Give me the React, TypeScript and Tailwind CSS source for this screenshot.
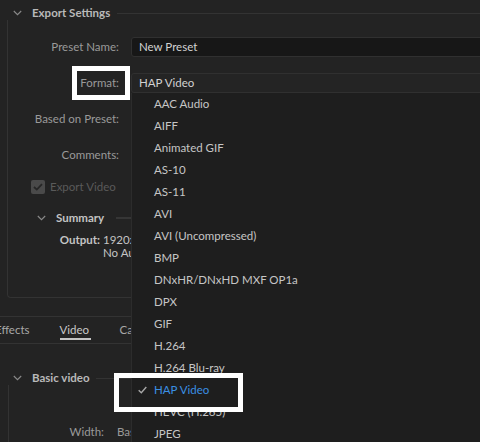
import React from "react";

function Chevron({ className = "" }: { className?: string }) {
  return (
    <svg className={className} width="9" height="6" viewBox="0 0 9 6" fill="none">
      <path d="M0.8 1 L4.5 4.7 L8.2 1" stroke="#8a8a8a" strokeWidth="1.1" />
    </svg>
  );
}

const items = [
  "AAC Audio",
  "AIFF",
  "Animated GIF",
  "AS-10",
  "AS-11",
  "AVI",
  "AVI (Uncompressed)",
  "BMP",
  "DNxHR/DNxHD MXF OP1a",
  "DPX",
  "GIF",
  "H.264",
  "H.264 Blu-ray",
  "HAP Video",
  "HEVC (H.265)",
  "JPEG",
];

export default function App() {
  return (
    <div className="relative w-[480px] h-[442px] overflow-hidden bg-[#232323] text-[11.5px] leading-[14px] font-['Lato','Noto_Sans',sans-serif]">
      {/* Export Settings section */}
      <div className="pt-[6px]">
        <div className="flex items-center h-[14px]">
          <Chevron className="ml-[13px]" />
          <span className="ml-[10px] font-bold text-[#b9b9b9]">Export Settings</span>
          <div className="ml-[7px] flex-1 h-px bg-[#333333]" />
        </div>
        <div className="ml-[7px] h-[278px] pt-[17px] border-l border-b border-[#333333] rounded-bl-[4px]">
          <div className="grid grid-cols-[111px_1fr] gap-x-[12px] items-center h-[20px]">
            <span className="text-right text-[#9a9a9a]">Preset Name:</span>
            <div className="h-[20px] bg-[#171717] border border-[#303030] rounded-[3px] pl-[7px] flex items-center text-[#d2d2d2] w-[360px]">
              New Preset
            </div>
          </div>
          <div className="mt-[16px] grid grid-cols-[111px_1fr] gap-x-[12px] items-center h-[20px]">
            <span className="text-right text-[#9a9a9a]">Format:</span>
            <div className="h-[20px] bg-[#242424] border border-[#303030] rounded-[3px] pl-[7px] flex items-center text-[#d2d2d2] w-[360px]">
              HAP Video
            </div>
          </div>
          <div className="mt-[16px] grid grid-cols-[111px_1fr] gap-x-[12px] items-center h-[20px]">
            <span className="text-right text-[#9a9a9a]">Based on Preset:</span>
            <div />
          </div>
          <div className="mt-[16px] grid grid-cols-[111px_1fr] gap-x-[12px] items-center h-[20px]">
            <span className="text-right text-[#9a9a9a]">Comments:</span>
            <div />
          </div>
          <div className="mt-[12px] flex items-center h-[20px]">
            <div className="ml-[23px] w-[14px] h-[14px] rounded-[2px] bg-[#4a4a4a] flex items-center justify-center">
              <svg width="10" height="8" viewBox="0 0 10 8" fill="none">
                <path d="M1 4 L3.8 6.6 L9 1.2" stroke="#262626" strokeWidth="1.8" />
              </svg>
            </div>
            <span className="ml-[5px] text-[#5a5a5a]">Export Video</span>
            <div className="ml-[24px] w-[14px] h-[14px] rounded-[2px] bg-[#4a4a4a]" />
          </div>
          <div className="mt-[14px] flex items-center h-[14px]">
            <Chevron className="ml-[29px]" />
            <span className="ml-[10px] font-bold text-[#c4c4c4]">Summary</span>
            <div className="ml-[12px] flex-1 h-[2px] bg-[#363636]" />
          </div>
          <div className="mt-[8px] grid grid-cols-[92px_1fr] gap-x-[3px] h-[13px] items-center whitespace-nowrap">
            <span className="text-right font-bold text-[#c4c4c4]">Output:</span>
            <span className="text-[#c4c4c4]">1920x1080 (1.0), 29.97 fps, Progressive, 00:00:10:00</span>
          </div>
          <div className="grid grid-cols-[92px_1fr] gap-x-[3px] h-[13px] items-center whitespace-nowrap">
            <span />
            <span className="text-[#c4c4c4]">No Audio</span>
          </div>
        </div>
      </div>

      {/* Tabs */}
      <div className="mt-[18px] border-t border-b border-[#333333] h-[28px] flex -ml-[5px] whitespace-nowrap">
        <div className="flex flex-col">
          <span className="pt-[6px] h-[20px] text-[#a8a8a8]">Effects</span>
        </div>
        <div className="ml-[30px] flex flex-col items-start">
          <span className="pt-[6px] h-[20px] text-[#c8c8c8]">Video</span>
          <div className="mt-[1px] h-[2px] w-[31px] bg-[#c4c4c4]" />
        </div>
        <div className="ml-[29px] flex flex-col">
          <span className="pt-[6px] h-[20px] text-[#a8a8a8]">Captions</span>
        </div>
      </div>

      {/* Basic video */}
      <div className="mt-[27px] flex items-center h-[14px]">
        <Chevron className="ml-[13px]" />
        <span className="ml-[10px] font-bold text-[#b9b9b9]">Basic video</span>
        <div className="ml-[6px] flex-1 h-px bg-[#333333]" />
      </div>
      <div className="ml-[8px] h-[80px] pt-[40px] border-l border-[#333333]">
        <div className="grid grid-cols-[95px_1fr] gap-x-[13px] h-[14px] items-center whitespace-nowrap">
          <span className="text-right text-[#9a9a9a]">Width:</span>
          <span className="text-[#9a9a9a]">Based on Source</span>
        </div>
      </div>

      {/* Dropdown menu */}
      <div className="absolute left-[131px] top-[93px] right-0 bottom-0 bg-[#1e1e1e] border-l border-[#2c2c2c]">
        {items.map((it) => {
          const sel = it === "HAP Video";
          return (
            <div key={it} className="relative h-[22px] flex items-center pl-[22px]">
              {sel && (
                <svg className="absolute left-[6px] top-[7px]" width="9" height="8" viewBox="0 0 9 8" fill="none">
                  <path d="M0.7 4.2 L3.3 6.7 L8.3 1" stroke="#a8a8a8" strokeWidth="1.4" />
                </svg>
              )}
              <span className={sel ? "text-[#3a8fe4]" : "text-[#c6c6c6]"}>{it}</span>
            </div>
          );
        })}
      </div>

      {/* Annotation boxes */}
      <div className="absolute left-[72px] top-[66px] w-[58px] h-[34px] border-[5px] border-white" />
      <div className="absolute left-[114px] top-[373px] w-[129px] h-[39px] border-[5px] border-white" />
    </div>
  );
}
